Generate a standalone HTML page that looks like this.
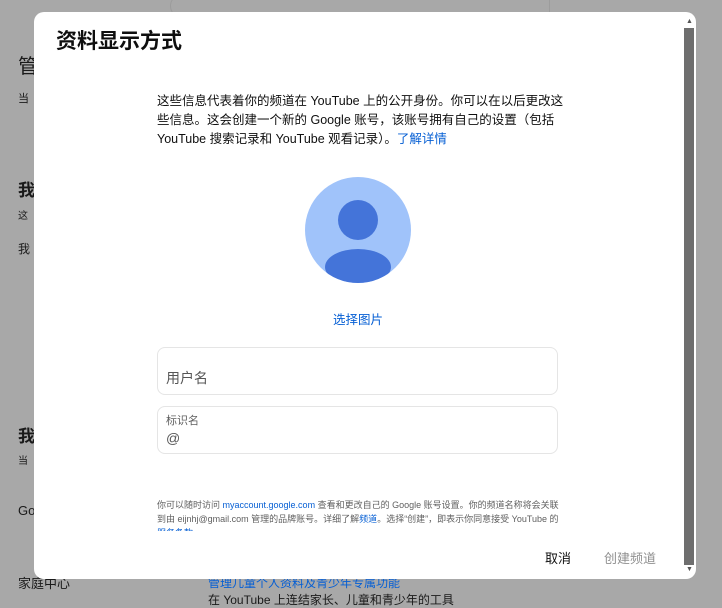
<!DOCTYPE html>
<html><head><meta charset="utf-8"><style>
*{margin:0;padding:0;box-sizing:border-box}
body{width:722px;height:597px;overflow:hidden;background:#a8a8a8;font-family:"Liberation Sans","Noto Sans CJK SC",sans-serif;position:relative}
.bg{position:absolute;color:#1a1a1a;font-size:14px}
.dlg{position:absolute;left:34px;top:12px;width:662px;height:567px;background:#fff;border-radius:10px;overflow:hidden}
.t{position:absolute;left:22px;top:13px;font-size:21px;font-weight:bold;color:#0f0f0f}
.p{position:absolute;left:123px;top:80px;width:410px;font-size:12.5px;line-height:19px;color:#0f0f0f}
a{color:#065fd4;text-decoration:none}
.box{position:absolute;left:123px;width:401px;border:1px solid #e5e5e5;border-radius:8px}
.s{position:absolute;left:123px;top:486px;width:410px;font-size:9px;line-height:14px;color:#606060;height:33px;overflow:hidden}
.sb{position:absolute;left:650px;top:16px;width:10px;height:537px;background:#6e6e6e}
</style></head><body>
<div class="bg" style="left:170px;top:-6px;width:380px;height:24px;border:1px solid #9c9c9c;border-radius:12px 0 0 12px"></div>
<div class="bg" style="left:18px;top:50px;font-size:20px">管</div>
<div class="bg" style="left:18px;top:90px;font-size:11px">当</div>
<div class="bg" style="left:18px;top:176px;font-size:17px;font-weight:bold">我</div>
<div class="bg" style="left:18px;top:207px;font-size:10px">这</div>
<div class="bg" style="left:18px;top:240px;font-size:12px">我</div>
<div class="bg" style="left:18px;top:422px;font-size:17px;font-weight:bold">我</div>
<div class="bg" style="left:18px;top:452px;font-size:10px">当</div>
<div class="bg" style="left:18px;top:503px;font-size:13px">Go</div>
<div class="bg" style="left:18px;top:573px;font-size:13px">家庭中心</div>
<div class="bg" style="left:208px;top:574px;font-size:12px;color:#065fd4">管理儿童个人资料及青少年专属功能</div>
<div class="bg" style="left:208px;top:591px;font-size:12px">在 YouTube 上连结家长、儿童和青少年的工具</div>
<div class="dlg">
<div class="t">资料显示方式</div>
<div class="p">这些信息代表着你的频道在 YouTube 上的公开身份。你可以在以后更改这些信息。这会创建一个新的 Google 账号，该账号拥有自己的设置（包括 YouTube 搜索记录和 YouTube 观看记录）。<a>了解详情</a></div>
<svg style="position:absolute;left:270px;top:164px" width="108" height="108" viewBox="0 0 108 108">
<defs><clipPath id="c"><circle cx="54" cy="54" r="53"/></clipPath></defs>
<circle cx="54" cy="54" r="53" fill="#a0c3fa"/>
<g clip-path="url(#c)"><circle cx="54" cy="44" r="20" fill="#4474d9"/><ellipse cx="54" cy="91" rx="33" ry="18" fill="#4474d9"/></g>
</svg>
<div style="position:absolute;left:0;width:648px;top:297px;text-align:center;font-size:12.5px;color:#065fd4">选择图片</div>
<div class="box" style="top:335px;height:48px"><span style="position:absolute;left:8px;top:20px;font-size:14px;color:#555">用户名</span></div>
<div class="box" style="top:394px;height:48px"><span style="position:absolute;left:8px;top:5px;font-size:11px;color:#606060">标识名</span><span style="position:absolute;left:8px;top:23px;font-size:14px;color:#555">@</span></div>
<div class="s">你可以随时访问 <a>myaccount.google.com</a> 查看和更改自己的 Google 账号设置。你的频道名称将会关联到由 eijnhj@gmail.com 管理的品牌账号。详细了解<a>频道</a>。选择“创建”，即表示你同意接受 YouTube 的<a>服务条款</a>。</div>
<div style="position:absolute;left:511px;top:536px;font-size:13px;color:#0f0f0f">取消</div>
<div style="position:absolute;left:570px;top:536px;font-size:13px;color:#909090">创建频道</div>
<div class="sb"></div>
<div style="position:absolute;left:652px;top:6px;font-size:7px;color:#555">▲</div>
<div style="position:absolute;left:652px;top:554px;font-size:7px;color:#555">▼</div>
</div>
</body></html>
